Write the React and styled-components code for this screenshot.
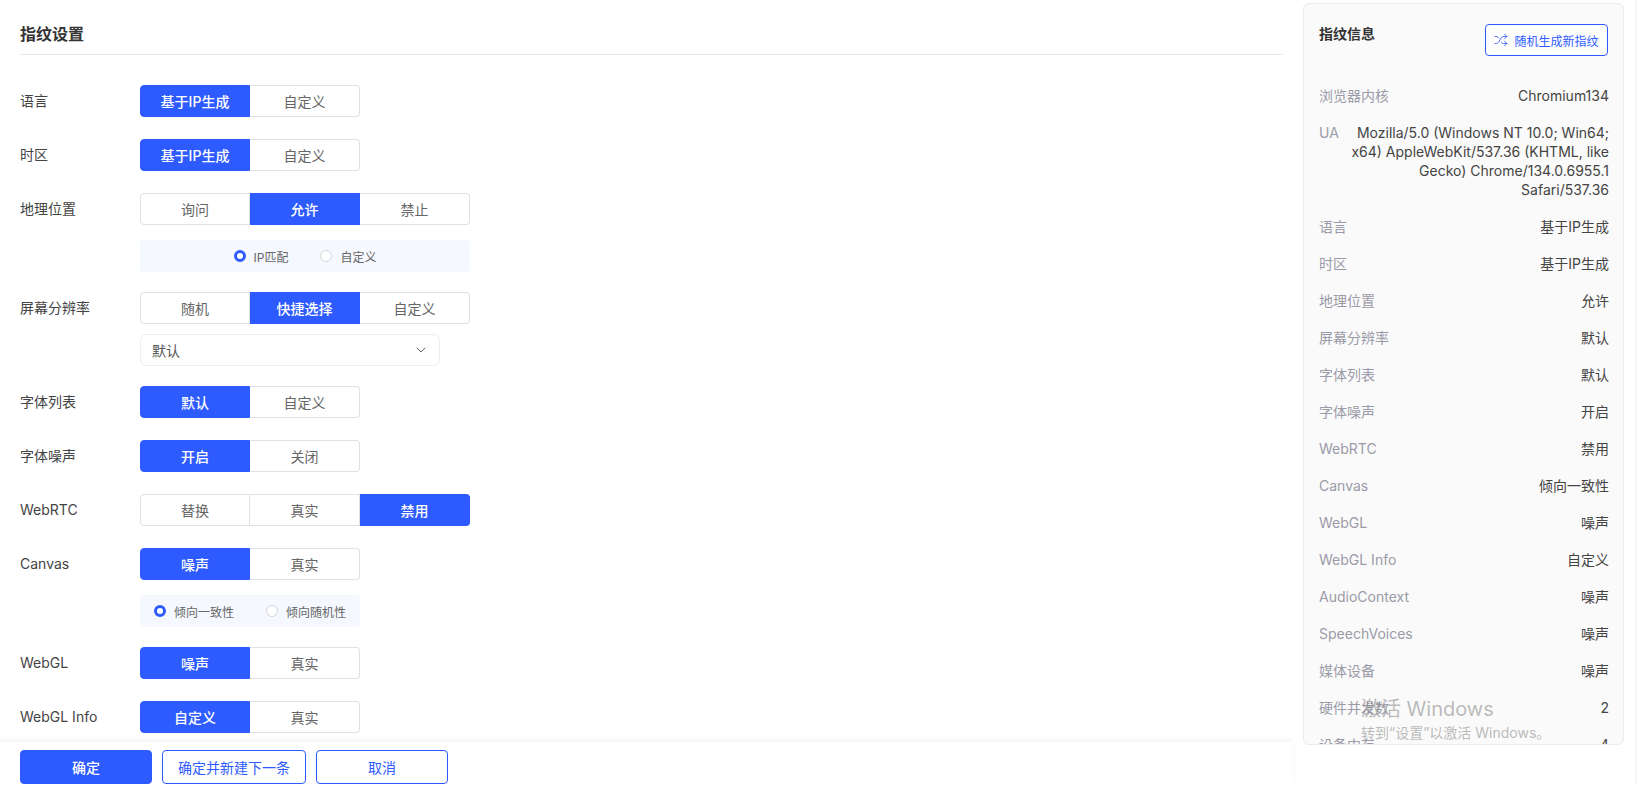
import React from "react";
import styled, { createGlobalStyle } from "styled-components";
import { Shuffle, ChevronDown } from "lucide-react";

const BLUE = "#2e5bff";

const GlobalStyle = createGlobalStyle`
  html, body {
    margin: 0;
    padding: 0;
    height: 100%;
    background: #fff;
    overflow: hidden;
    font-family: Inter, "Noto Sans CJK SC", sans-serif;
  }
  * { box-sizing: border-box; }
`;

const Page = styled.div`
  display: flex;
  width: 1637px;
  height: 785px;
  overflow: hidden;
`;

const Left = styled.div`
  width: 1293px;
  height: 785px;
  display: flex;
  flex-direction: column;
`;

const FormArea = styled.div`
  flex: 1;
  min-height: 0;
  overflow: hidden;
  padding: 0 10px 0 20px;
`;

const Title = styled.h2`
  margin: 0 0 30px;
  height: 55px;
  padding-top: 23px;
  border-bottom: 1px solid #e8e9ee;
  font-size: 16px;
  line-height: 22px;
  font-weight: 700;
  color: #333;
`;

const Row = styled.div`
  display: flex;
  margin-bottom: ${(p) => (p.$hasExtra ? 20 : 22)}px;
`;

const Label = styled.div`
  width: 120px;
  flex: none;
  height: 32px;
  line-height: 32px;
  font-size: 14px;
  color: #444;
`;

const Controls = styled.div`
  display: flex;
  flex-direction: column;
  width: fit-content;
`;

const Segments = styled.div`
  display: flex;
`;

const Segment = styled.div`
  width: 110px;
  height: 32px;
  display: flex;
  align-items: center;
  justify-content: center;
  font-size: 14px;
  font-weight: ${(p) => (p.$active ? 500 : 400)};
  color: ${(p) => (p.$active ? "#fff" : "#666")};
  background: ${(p) => (p.$active ? BLUE : "#fff")};
  border: 1px solid ${(p) => (p.$active ? BLUE : "#dfe0e8")};
  border-left-width: 0;
  &:first-child {
    border-left-width: 1px;
    border-radius: 4px 0 0 4px;
  }
  &:last-child {
    border-radius: 0 4px 4px 0;
  }
`;

const RadioPanel = styled.div`
  margin-top: 15px;
  height: 32px;
  display: flex;
  align-items: center;
  justify-content: center;
  gap: 32px;
  background: #f5f8fe;
  border-radius: 4px;
`;

const RadioItem = styled.div`
  display: flex;
  align-items: center;
  gap: 8px;
  font-size: 12px;
  color: #666;
`;

const RadioDot = styled.span`
  width: 12px;
  height: 12px;
  border-radius: 50%;
  background: #fff;
  border: ${(p) => (p.$checked ? `3.5px solid ${BLUE}` : "1px solid #d4d5da")};
`;

const Select = styled.div`
  margin-top: 10px;
  width: 300px;
  height: 32px;
  padding: 0 10px 0 11px;
  display: flex;
  align-items: center;
  justify-content: space-between;
  border: 1px solid #eceef5;
  border-radius: 6px;
  font-size: 14px;
  color: #555;
`;

const Footer = styled.div`
  flex: none;
  height: 43px;
  padding: 8px 0 0 20px;
  display: flex;
  gap: 10px;
  background: #fff;
  box-shadow: 0 -2px 6px rgba(0, 0, 0, 0.05);
`;

const FooterButton = styled.div`
  width: ${(p) => p.$width}px;
  height: 34px;
  display: flex;
  align-items: center;
  justify-content: center;
  border: 1px solid ${BLUE};
  border-radius: 4px;
  font-size: 14px;
  font-weight: ${(p) => (p.$primary ? 500 : 400)};
  color: ${(p) => (p.$primary ? "#fff" : BLUE)};
  background: ${(p) => (p.$primary ? BLUE : "#fff")};
`;

const Side = styled.aside`
  position: relative;
  width: 321px;
  height: 742px;
  margin: 3px 0 0 10px;
  padding: 20px 14px 0 15px;
  overflow: hidden;
  background: #fafafa;
  border: 1px solid #ebebeb;
  border-radius: 6px;
`;

const SideHead = styled.div`
  display: flex;
  justify-content: space-between;
  align-items: flex-start;
  margin-bottom: 30px;
`;

const SideTitle = styled.div`
  font-size: 14px;
  line-height: 19px;
  font-weight: 700;
  color: #333;
`;

const RandomButton = styled.div`
  width: 123px;
  height: 32px;
  margin-right: 1px;
  display: flex;
  align-items: center;
  justify-content: center;
  gap: 6px;
  border: 1px solid ${BLUE};
  border-radius: 4px;
  font-size: 12px;
  color: ${BLUE};
  background: #fff;
`;

const InfoList = styled.div`
  display: flex;
  flex-direction: column;
  gap: 18px;
`;

const InfoRow = styled.div`
  display: flex;
  justify-content: space-between;
  gap: 8px;
  font-size: 14px;
  line-height: 19px;
`;

const InfoKey = styled.div`
  flex: none;
  color: #9a9aa8;
`;

const InfoValue = styled.div`
  text-align: right;
  color: #444;
`;

const Watermark = styled.div`
  position: absolute;
  left: 57px;
  top: 691px;
  pointer-events: none;
  color: rgba(130, 130, 130, 0.55);
`;

const WatermarkTitle = styled.div`
  font-size: 20px;
  line-height: 28px;
`;

const WatermarkHint = styled.div`
  font-size: 14px;
  line-height: 20px;
`;

const ScrollTrack = styled.div`
  width: 2px;
  height: 785px;
  margin-left: auto;
  background: #f6f6f6;
`;

const fields = [
  { label: "语言", options: ["基于IP生成", "自定义"], active: 0 },
  { label: "时区", options: ["基于IP生成", "自定义"], active: 0 },
  {
    label: "地理位置",
    options: ["询问", "允许", "禁止"],
    active: 1,
    radios: ["IP匹配", "自定义"],
  },
  {
    label: "屏幕分辨率",
    options: ["随机", "快捷选择", "自定义"],
    active: 1,
    select: "默认",
  },
  { label: "字体列表", options: ["默认", "自定义"], active: 0 },
  { label: "字体噪声", options: ["开启", "关闭"], active: 0 },
  { label: "WebRTC", options: ["替换", "真实", "禁用"], active: 2 },
  {
    label: "Canvas",
    options: ["噪声", "真实"],
    active: 0,
    radios: ["倾向一致性", "倾向随机性"],
  },
  { label: "WebGL", options: ["噪声", "真实"], active: 0 },
  { label: "WebGL Info", options: ["自定义", "真实"], active: 0 },
];

const info = [
  ["浏览器内核", "Chromium134"],
  [
    "UA",
    "Mozilla/5.0 (Windows NT 10.0; Win64; x64) AppleWebKit/537.36 (KHTML, like Gecko) Chrome/134.0.6955.1 Safari/537.36",
  ],
  ["语言", "基于IP生成"],
  ["时区", "基于IP生成"],
  ["地理位置", "允许"],
  ["屏幕分辨率", "默认"],
  ["字体列表", "默认"],
  ["字体噪声", "开启"],
  ["WebRTC", "禁用"],
  ["Canvas", "倾向一致性"],
  ["WebGL", "噪声"],
  ["WebGL Info", "自定义"],
  ["AudioContext", "噪声"],
  ["SpeechVoices", "噪声"],
  ["媒体设备", "噪声"],
  ["硬件并发数", "2"],
  ["设备内存", "4"],
];

function Field({ label, options, active, radios, select }) {
  return (
    <Row $hasExtra={Boolean(radios || select)}>
      <Label>{label}</Label>
      <Controls>
        <Segments>
          {options.map((opt, i) => (
            <Segment key={opt} $active={i === active}>
              {opt}
            </Segment>
          ))}
        </Segments>
        {radios && (
          <RadioPanel>
            {radios.map((r, i) => (
              <RadioItem key={r}>
                <RadioDot $checked={i === 0} />
                {r}
              </RadioItem>
            ))}
          </RadioPanel>
        )}
        {select && (
          <Select>
            {select}
            <ChevronDown size={16} color="#666" strokeWidth={1.5} />
          </Select>
        )}
      </Controls>
    </Row>
  );
}

export default function App() {
  return (
    <Page>
      <GlobalStyle />
      <Left>
        <FormArea>
          <Title>指纹设置</Title>
          {fields.map((f) => (
            <Field key={f.label} {...f} />
          ))}
        </FormArea>
        <Footer>
          <FooterButton $primary $width={132}>确定</FooterButton>
          <FooterButton $width={144}>确定并新建下一条</FooterButton>
          <FooterButton $width={132}>取消</FooterButton>
        </Footer>
      </Left>
      <Side>
        <SideHead>
          <SideTitle>指纹信息</SideTitle>
          <RandomButton>
            <Shuffle size={14} strokeWidth={1.5} />
            随机生成新指纹
          </RandomButton>
        </SideHead>
        <InfoList>
          {info.map(([k, v]) => (
            <InfoRow key={k}>
              <InfoKey>{k}</InfoKey>
              <InfoValue>{v}</InfoValue>
            </InfoRow>
          ))}
        </InfoList>
        <Watermark>
          <WatermarkTitle>激活 Windows</WatermarkTitle>
          <WatermarkHint>转到“设置”以激活 Windows。</WatermarkHint>
        </Watermark>
      </Side>
      <ScrollTrack />
    </Page>
  );
}
